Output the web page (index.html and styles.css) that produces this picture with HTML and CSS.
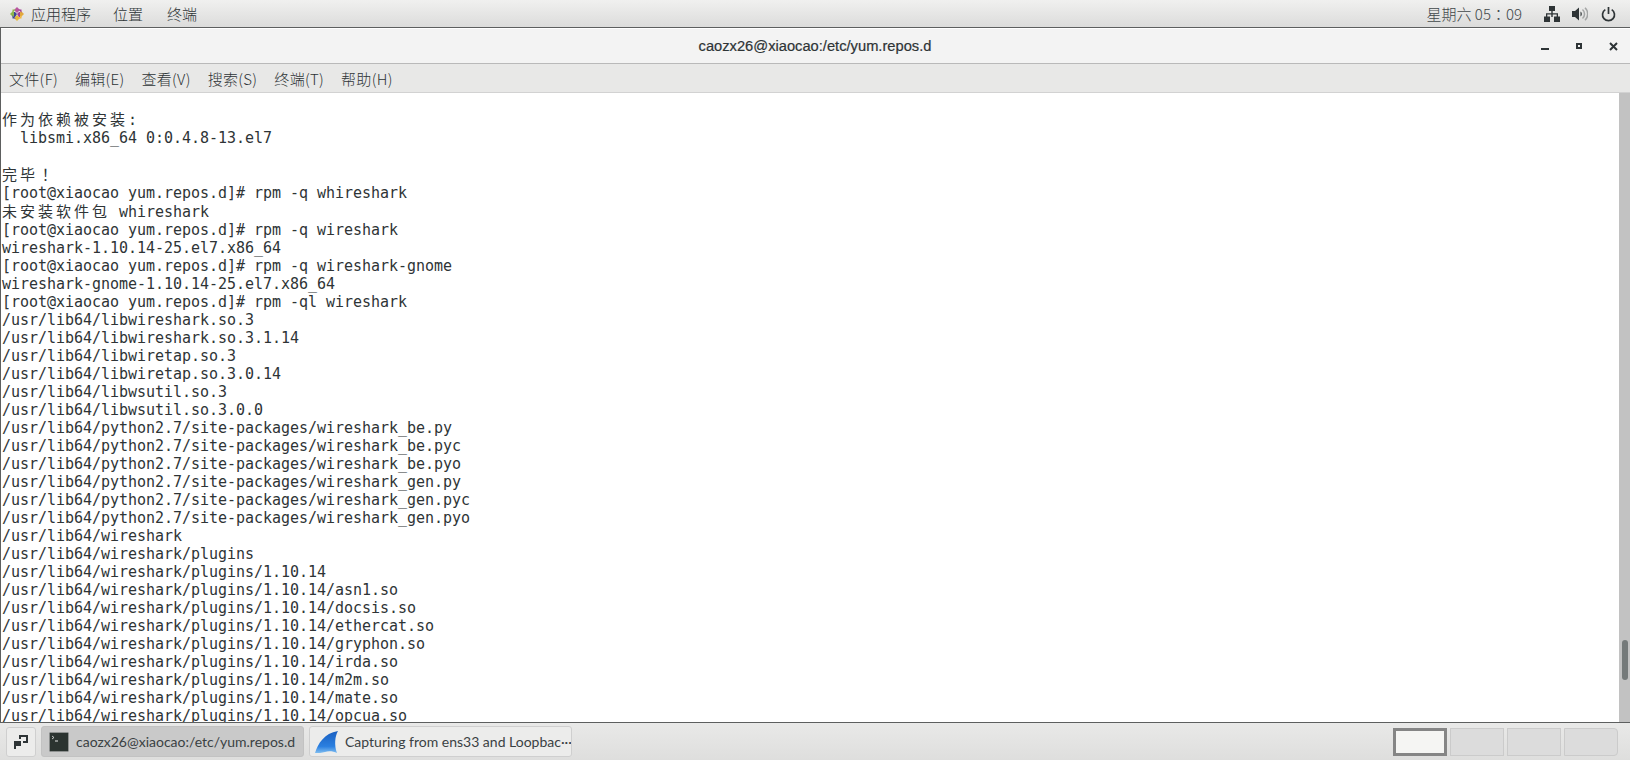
FILE: index.html
```html
<!DOCTYPE html>
<html lang="zh">
<head>
<meta charset="utf-8">
<title>caozx26@xiaocao:/etc/yum.repos.d</title>
<link rel="stylesheet" href="styles.css">
</head>
<body>
<header class="topbar">
  <div class="top-menu">
    <svg class="logo" width="16" height="16" viewBox="0 0 16 16">
      <path d="M8 1l3 3-3 3-3-3z" fill="#b9559f"/>
      <path d="M15 8l-3 3-3-3 3-3z" fill="#e3a93c"/>
      <path d="M8 15l-3-3 3-3 3 3z" fill="#e8b93a"/>
      <path d="M1 8l3-3 3 3-3 3z" fill="#8fb84a"/>
      <path d="M3.500 3.500h3.200L4.900 5.300 3.500 6.700z" fill="#8fb84a"/>
      <path d="M12.500 3.500H9.300l1.800 1.800 1.400 1.400z" fill="#a23f93"/>
      <path d="M3.500 12.500h3.200l-1.800-1.800-1.400-1.400z" fill="#3d4590"/>
      <path d="M12.500 12.500H9.300l1.800-1.800 1.400-1.400z" fill="#f0b63c"/>
      <path d="M8 8L6 6H5v5h1z" fill="#3d4590"/>
      <path d="M8 8l2-2h1v5h-1z" fill="#a23f93"/>
    </svg>
    <span class="top-item app">应用程序</span>
    <span class="top-item">位置</span>
    <span class="top-item">终端</span>
  </div>
  <div class="top-status">
    <span class="clock">星期六 05<span lang="zh-TW" class="punct">：</span>09</span>
    <svg class="net" width="16" height="16" viewBox="0 0 16 16"><path d="M5 0h6v5H8.700v2.200H14V11h-1.300V8.500H8.700V11H7.300V8.500H3.300V11H2V7.200h5.300V5H5z" fill="#2e3436"/><path d="M0 10.500h6V16H0zM10 10.500h6V16h-6z" fill="#2e3436"/></svg>
    <svg class="vol" width="16" height="16" viewBox="0 0 16 16"><path d="M0 5h3l4-3.500v13L3 11H0z" fill="#2e3436"/><path d="M8.500 5.500a3 3 0 0 1 0 5z" fill="#2e3436"/><path d="M10.500 3.500a6 6 0 0 1 0 9M13 1.800a8.500 8.500 0 0 1 0 12.400" fill="none" stroke="#a4a6a6" stroke-width="1.500"/></svg>
    <svg class="power" width="15" height="16" viewBox="0 0 15 16"><path d="M4.300 3.600a6 6 0 1 0 6.400 0" fill="none" stroke="#2e3436" stroke-width="1.700"/><path d="M7.500 1v7" stroke="#2e3436" stroke-width="1.700"/></svg>
  </div>
</header>

<main class="window">
  <div class="titlebar">
    <span class="title">caozx26@xiaocao:/etc/yum.repos.d</span>
    <div class="win-controls">
      <span class="win-min"></span>
      <span class="win-max"></span>
      <svg class="win-close" width="9" height="9" viewBox="0 0 9 9"><path d="M1 1l7 7M8 1L1 8" stroke="#2e3436" stroke-width="2"/></svg>
    </div>
  </div>
  <nav class="menubar">
    <span>文件(F)</span><span>编辑(E)</span><span>查看(V)</span><span>搜索(S)</span><span>终端(T)</span><span>帮助(H)</span>
  </nav>
  <div class="terminal">
    <pre class="output"> 
<span class="cjk">作为依赖被安装</span>:
  libsmi.x86_64 0:0.4.8-13.el7
 
<span class="cjk">完毕</span><span lang="zh-TW" class="cjk punct">！</span>
[root@xiaocao yum.repos.d]# rpm -q whireshark
<span class="cjk">未安装软件包</span> whireshark
[root@xiaocao yum.repos.d]# rpm -q wireshark
wireshark-1.10.14-25.el7.x86_64
[root@xiaocao yum.repos.d]# rpm -q wireshark-gnome
wireshark-gnome-1.10.14-25.el7.x86_64
[root@xiaocao yum.repos.d]# rpm -ql wireshark
/usr/lib64/libwireshark.so.3
/usr/lib64/libwireshark.so.3.1.14
/usr/lib64/libwiretap.so.3
/usr/lib64/libwiretap.so.3.0.14
/usr/lib64/libwsutil.so.3
/usr/lib64/libwsutil.so.3.0.0
/usr/lib64/python2.7/site-packages/wireshark_be.py
/usr/lib64/python2.7/site-packages/wireshark_be.pyc
/usr/lib64/python2.7/site-packages/wireshark_be.pyo
/usr/lib64/python2.7/site-packages/wireshark_gen.py
/usr/lib64/python2.7/site-packages/wireshark_gen.pyc
/usr/lib64/python2.7/site-packages/wireshark_gen.pyo
/usr/lib64/wireshark
/usr/lib64/wireshark/plugins
/usr/lib64/wireshark/plugins/1.10.14
/usr/lib64/wireshark/plugins/1.10.14/asn1.so
/usr/lib64/wireshark/plugins/1.10.14/docsis.so
/usr/lib64/wireshark/plugins/1.10.14/ethercat.so
/usr/lib64/wireshark/plugins/1.10.14/gryphon.so
/usr/lib64/wireshark/plugins/1.10.14/irda.so
/usr/lib64/wireshark/plugins/1.10.14/m2m.so
/usr/lib64/wireshark/plugins/1.10.14/mate.so
/usr/lib64/wireshark/plugins/1.10.14/opcua.so</pre>
    <div class="scrollbar"><div class="thumb"></div></div>
  </div>
</main>

<footer class="taskbar">
  <button class="show-desktop">
    <svg width="14" height="14" viewBox="0 0 14 14"><path d="M5 0h9v8H9V6h3V2H7v2H5z" fill="#2e3436"/><path d="M0 6h7v5H2v3H0z" fill="#2e3436"/></svg>
  </button>
  <div class="task active">
    <svg class="term-icon" width="20" height="20" viewBox="0 0 20 20"><rect x=".5" y=".5" width="19" height="19" rx="1" fill="#2b3330" stroke="#8e9190"/><path d="M3 4l2 1.500L3 7" fill="none" stroke="#e6e6e6" stroke-width=".8"/><path d="M6 9h3" stroke="#e6e6e6"/></svg>
    <span>caozx26@xiaocao:/etc/yum.repos.d</span>
  </div>
  <div class="task">
    <svg class="shark" width="24" height="24" viewBox="0 0 24 24"><defs><linearGradient id="fin" x1="0" y1="0" x2="0" y2="1"><stop offset="0" stop-color="#1a5fc0"/><stop offset=".7" stop-color="#2a7fe0"/><stop offset="1" stop-color="#7fbdf0"/></linearGradient></defs><path d="M1 23C4 14 10 3 24 1c-3 5-4 14-1 22-4-2-9-2-12-1s-7 1-10 1z" fill="url(#fin)"/></svg>
    <span class="task-label">Capturing from ens33 and Loopbac···</span>
  </div>
  <div class="workspaces">
    <div class="ws current"></div>
    <div class="ws"></div>
    <div class="ws"></div>
    <div class="ws last"></div>
  </div>
</footer>
</body>
</html>
```
FILE: styles.css
```css
* { box-sizing: border-box; }
html, body { margin: 0; padding: 0; width: 1630px; height: 760px; overflow: hidden; background: #fff; }
body { display: flex; flex-direction: column; font-family: "Liberation Sans", "Noto Sans CJK SC", sans-serif; color: #2e3436; }

.topbar { height: 28px; flex: none; display: flex; justify-content: space-between; align-items: center; background: linear-gradient(#f0f0ef, #dcdcdb); border-bottom: 1px solid #5d5f5f; font-size: 15px; }
.top-menu { display: flex; align-items: center; padding-left: 9px; }
.logo { margin-right: 6px; }
.top-item { font-family: "Noto Sans CJK SC", sans-serif; font-weight: 300; margin-right: 24px; color: #2e3436; }
.top-item.app { margin-right: 22px; }
.top-status { display: flex; align-items: center; padding-right: 14px; }
.clock { font-family: "Noto Sans CJK SC", sans-serif; font-weight: 300; margin-right: 22px; color: #41484a; }
.net { margin-right: 12px; }
.vol { margin-right: 13px; }

.window { flex: 1; min-height: 0; display: flex; flex-direction: column; border-left: 1px solid #5d5f5f; }
.titlebar { height: 36px; flex: none; display: flex; align-items: center; justify-content: center; position: relative; background: #f3f3f3; border-top: 1px solid #fff; border-bottom: 1px solid #b9b9b9; }
.title { font-size: 14.7px; color: #2e3436; -webkit-text-stroke: .2px #2e3436; margin-left: -1px; }
.win-controls { position: absolute; right: 0; top: 0; bottom: 0; }
.win-min { position: absolute; right: 81px; top: 19px; width: 8px; height: 2px; background: #2e3436; }
.win-max { position: absolute; right: 48px; top: 14px; width: 6px; height: 6px; border: 2px solid #2e3436; }
.win-close { position: absolute; right: 12px; top: 13px; }

.menubar { height: 29px; flex: none; display: flex; align-items: center; gap: 17px; padding-left: 8px; background: #e8e8e7; border-bottom: 1px solid #d2d2d2; font-family: "Noto Sans CJK SC", sans-serif; font-weight: 300; font-size: 15px; letter-spacing: .3px; color: #2e3436; }

.terminal { flex: 1; min-height: 0; display: flex; background: #fff; overflow: hidden; }
.output { flex: 1; margin: -1px 0 0; padding: 0 0 0 1px; font-family: "DejaVu Sans Mono", "Noto Sans CJK SC", monospace; font-size: 15px; letter-spacing: -.03px; line-height: 18px; color: #2e3436; overflow: hidden; }
.cjk { font-family: "Noto Sans CJK SC", sans-serif; letter-spacing: 3px; }
.punct { font-family: "Noto Sans CJK TC", sans-serif; }
.scrollbar { width: 11px; flex: none; background: #c2c2c2; padding: 547px 2px 0 3px; }
.thumb { width: 6px; height: 40px; border-radius: 3px; background: #757a7a; }

.taskbar { height: 38px; flex: none; display: flex; align-items: center; padding: 0 12px 0 6px; background: linear-gradient(#e9e9e8, #dededd); border-top: 1px solid #5d5f5f; font-family: "Lato", "Liberation Sans", sans-serif; font-size: 14px; }
.show-desktop { width: 30px; height: 30px; padding: 0; display: flex; align-items: center; justify-content: center; border: 1px solid #cfcfcf; border-radius: 3px; background: #ececeb; margin-right: 5px; }
.task { width: 263px; height: 31px; display: flex; align-items: center; gap: 7px; padding: 0 7px; margin-right: 5px; border: 1px solid #cfcfcf; border-radius: 3px; background: #ececeb; color: #3a4143; white-space: nowrap; overflow: hidden; }
.task.active { background: #c9c9c9; border-color: #c2c2c2; }
.task .shark { flex: none; margin-left: -3px; }
.term-icon { flex: none; }
.workspaces { margin-left: auto; display: flex; gap: 3px; }
.ws { width: 54px; height: 28px; background: #dcdcdc; border: 1px solid #cbcbcb; }
.ws.current { background: #f5f5f3; border: 3px solid #858585; }
.ws.last { border-radius: 0 4px 4px 0; }
```
